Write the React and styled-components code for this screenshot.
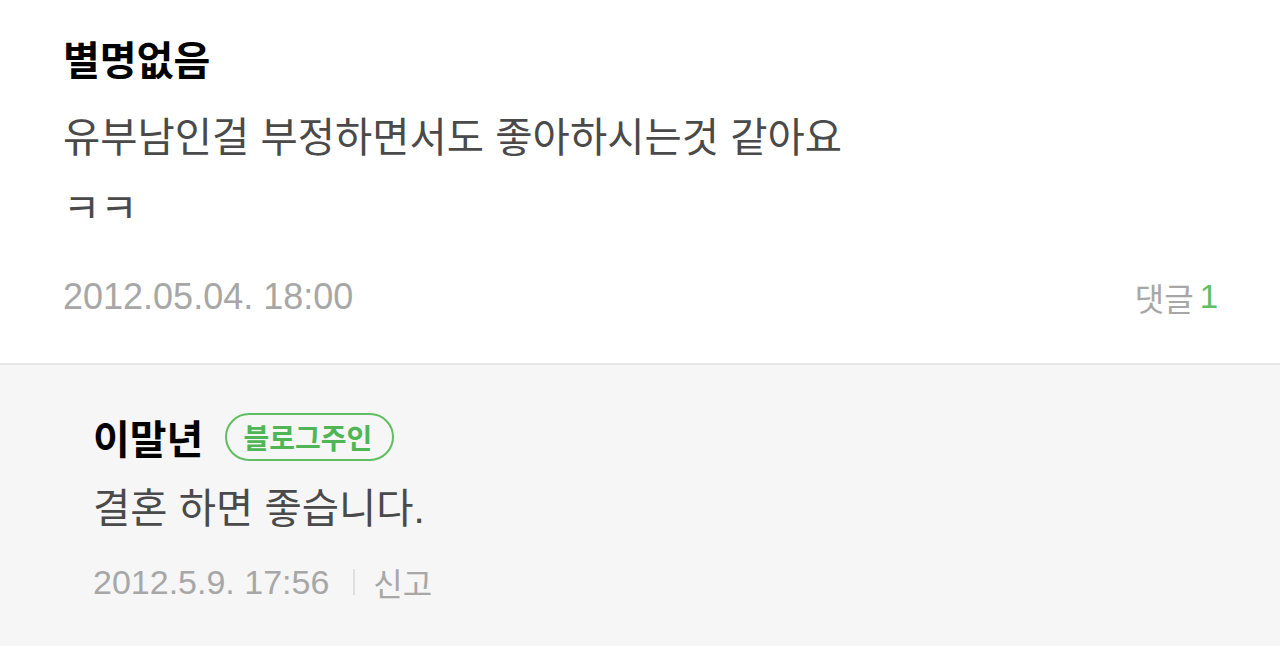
import React from "react";
import styled, { createGlobalStyle } from "styled-components";

const GlobalStyle = createGlobalStyle`
  html, body {
    margin: 0;
    padding: 0;
    background: #f6f6f6;
  }
  body {
    font-family: "Liberation Sans", "Noto Sans CJK KR", sans-serif;
    -webkit-font-smoothing: antialiased;
  }
`;

const Page = styled.div`
  width: 1280px;
  min-height: 646px;
  background: #f6f6f6;
`;

const Comment = styled.section`
  background: #fff;
  padding: 32px 62px 46px 63px;
  border-bottom: 2px solid #e6e6e6;
`;

const Reply = styled.section`
  padding: 46px 62px 30px 93px;
`;

const Head = styled.div`
  display: flex;
  align-items: center;
  gap: 22px;
  height: 52px;
`;

const Nick = styled.span`
  font-size: 40px;
  font-weight: 700;
  color: #000;
`;

const OwnerBadge = styled.span`
  display: inline-flex;
  align-items: center;
  box-sizing: border-box;
  height: 48px;
  padding: 0 20px 0 16px;
  border: 2px solid #5dbf5f;
  border-radius: 24px;
  color: #4fb555;
  font-size: 28px;
  font-weight: 700;
`;

const Body = styled.p`
  margin: ${(p) => (p.$reply ? "11px" : "19px")} 0 0;
  font-size: 40.5px;
  line-height: ${(p) => (p.$reply ? "70px" : "71px")};
  color: #4a4a4a;
  white-space: pre-line;
`;

const Meta = styled.div`
  display: flex;
  align-items: center;
  justify-content: space-between;
  height: 40px;
  margin-top: ${(p) => (p.$reply ? "18px" : "32px")};
  font-size: ${(p) => (p.$reply ? "34px" : "36px")};
  color: #a7a7a7;
`;

const MetaLeft = styled.div`
  display: flex;
  align-items: center;
`;

const Hangul = styled.span`
  font-size: 32px;
`;

const Divider = styled.span`
  display: inline-block;
  width: 2px;
  height: 26px;
  margin: 0 18px 0 24px;
  background: #e0e0e0;
`;

const ReplyCount = styled.span`
  display: flex;
  align-items: center;
  color: #a7a7a7;
  b {
    font-weight: 400;
    font-size: 33px;
    color: #5cbf62;
    margin-left: 6px;
  }
`;

export default function App() {
  return (
    <>
      <GlobalStyle />
      <Page>
        <Comment>
          <Head>
            <Nick>별명없음</Nick>
          </Head>
          <Body>{"유부남인걸 부정하면서도 좋아하시는것 같아요\nㅋㅋ"}</Body>
          <Meta>
            <span>2012.05.04. 18:00</span>
            <ReplyCount>
              <Hangul>댓글</Hangul>
              <b>1</b>
            </ReplyCount>
          </Meta>
        </Comment>
        <Reply>
          <Head>
            <Nick>이말년</Nick>
            <OwnerBadge>블로그주인</OwnerBadge>
          </Head>
          <Body $reply>결혼 하면 좋습니다.</Body>
          <Meta $reply>
            <MetaLeft>
              <span>2012.5.9. 17:56</span>
              <Divider />
              <Hangul>신고</Hangul>
            </MetaLeft>
          </Meta>
        </Reply>
      </Page>
    </>
  );
}
